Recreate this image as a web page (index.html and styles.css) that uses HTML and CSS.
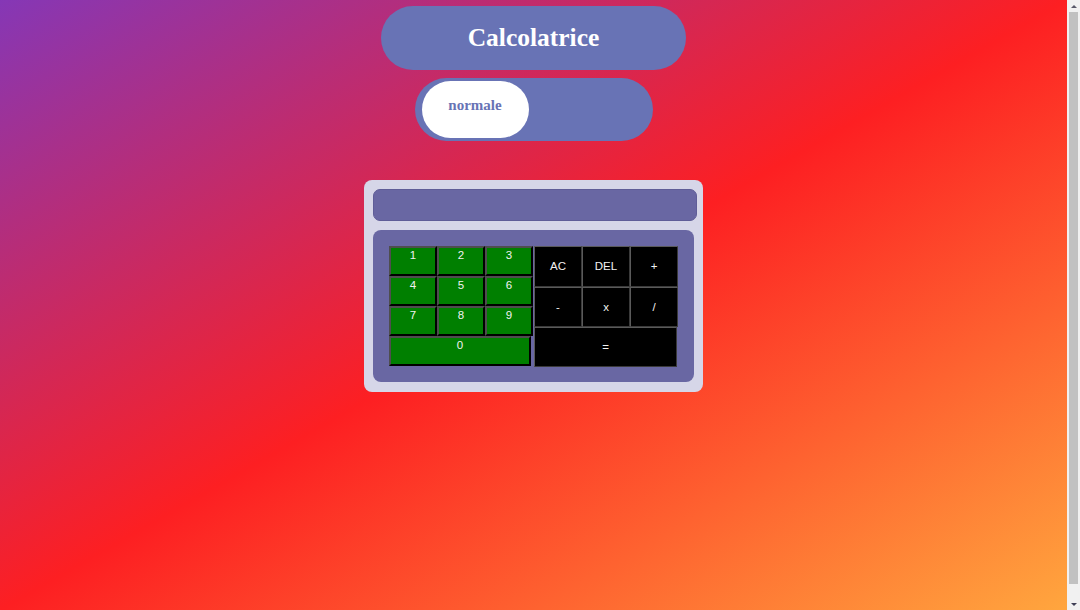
FILE: index.html
```html
<!DOCTYPE html>
<html lang="it">
<head>
<meta charset="utf-8">
<title>Calcolatrice</title>
<link rel="stylesheet" href="styles.css">
</head>
<body>
  <div class="page">
    <header class="title-pill">
      <h1 class="title">Calcolatrice</h1>
    </header>
    <div class="mode-switch">
      <div class="mode-knob">normale</div>
    </div>
    <main class="calculator">
      <div class="display"></div>
      <div class="keypad">
        <div class="digits">
          <button class="key key-digit">1</button>
          <button class="key key-digit">2</button>
          <button class="key key-digit">3</button>
          <button class="key key-digit">4</button>
          <button class="key key-digit">5</button>
          <button class="key key-digit">6</button>
          <button class="key key-digit">7</button>
          <button class="key key-digit">8</button>
          <button class="key key-digit">9</button>
          <button class="key key-digit key-zero">0</button>
        </div>
        <div class="ops">
          <button class="key key-op">AC</button>
          <button class="key key-op">DEL</button>
          <button class="key key-op">+</button>
          <button class="key key-op">-</button>
          <button class="key key-op">x</button>
          <button class="key key-op">/</button>
          <button class="key key-op key-equals">=</button>
        </div>
      </div>
    </main>
  </div>
  <div class="scrollbar" aria-hidden="true">
    <div class="scroll-arrow"><span class="tri tri-up"></span></div>
    <div class="scroll-track"><div class="scroll-thumb"></div></div>
    <div class="scroll-arrow"><span class="tri tri-down"></span></div>
  </div>
</body>
</html>
```

FILE: styles.css
```css
html, body {
  height: 100%;
}

body {
  margin: 0;
  display: flex;
  overflow: hidden;
  font-family: "Liberation Serif", "Times New Roman", serif;
}

.page {
  flex: 1;
  height: 100vh;
  padding-top: 6px;
  box-sizing: border-box;
  display: flex;
  flex-direction: column;
  align-items: center;
  background: linear-gradient(to bottom right, #8537b6 0%, #fd1f22 50%, #ffa63e 100%);
}

/* scrollbar imitation */
.scrollbar {
  width: 13px;
  height: 100vh;
  background: #f1f1f1;
  display: flex;
  flex-direction: column;
}

.scroll-arrow {
  height: 12px;
  display: flex;
  align-items: center;
  justify-content: center;
}

.tri {
  width: 0;
  height: 0;
  border-left: 3px solid transparent;
  border-right: 3px solid transparent;
}

.tri-up {
  border-bottom: 3px solid #5a5a6a;
}

.tri-down {
  border-top: 3px solid #3f3f55;
}

.scroll-track {
  flex: 1;
  padding: 0 2px;
}

.scroll-thumb {
  height: 572px;
  background: #c1c1c1;
}

/* header */
.title-pill {
  width: 305px;
  height: 64px;
  border-radius: 32px;
  background: #6873b5;
  display: flex;
  align-items: center;
  justify-content: center;
}

.title {
  margin: 0;
  font-size: 25.5px;
  font-weight: bold;
  color: #ffffff;
  line-height: 30px;
}

.mode-switch {
  margin-top: 8px;
  width: 238px;
  height: 63px;
  box-sizing: border-box;
  border-radius: 32px;
  background: #6873b5;
  padding: 3px 0 3px 7px;
  display: flex;
}

.mode-knob {
  width: 107px;
  height: 57px;
  box-sizing: border-box;
  border-radius: 29px;
  background: #ffffff;
  color: #6873b5;
  font-weight: bold;
  font-size: 15px;
  line-height: 18px;
  padding-top: 15px;
  text-align: center;
}

/* calculator */
.calculator {
  margin-top: 39px;
  width: 339px;
  box-sizing: border-box;
  padding: 9px 6px 10px 9px;
  border-radius: 8px;
  background: #d6d6e8;
}

.display {
  width: 324px;
  height: 32px;
  box-sizing: border-box;
  border-radius: 7px;
  background: #6967a3;
  border: 1px solid #5f5d98;
}

.keypad {
  margin-top: 9px;
  width: 321px;
  box-sizing: border-box;
  padding: 16px 16px 15px 16px;
  border-radius: 8px;
  background: #6967a3;
  display: flex;
}

.digits {
  display: grid;
  grid-template-columns: repeat(3, 48px);
  grid-template-rows: repeat(4, 30px);
  width: 144px;
}

.ops {
  margin-left: 1px;
  display: grid;
  grid-template-columns: repeat(3, 48px);
  grid-template-rows: 41px 40px 40px;
}

.key {
  margin: 0;
  padding: 0;
  font-family: "Liberation Sans", Arial, sans-serif;
  font-size: 11.5px;
  line-height: 13px;
  color: #f2f2f2;
  cursor: pointer;
  display: flex;
  justify-content: center;
}

.key-digit {
  background: #007f00;
  border: 2px solid;
  border-color: #4e4e4e #000000 #000000 #4e4e4e;
  align-items: flex-start;
  padding-top: 1px;
}

.key-zero {
  grid-column: 1 / span 3;
  width: 142px;
}

.key-op {
  background: #000000;
  border: 1px solid;
  border-color: #5a5a5a #3a3a3a #3a3a3a #5a5a5a;
  align-items: center;
}

.key-equals {
  grid-column: 1 / span 3;
  width: 143px;
}
```
